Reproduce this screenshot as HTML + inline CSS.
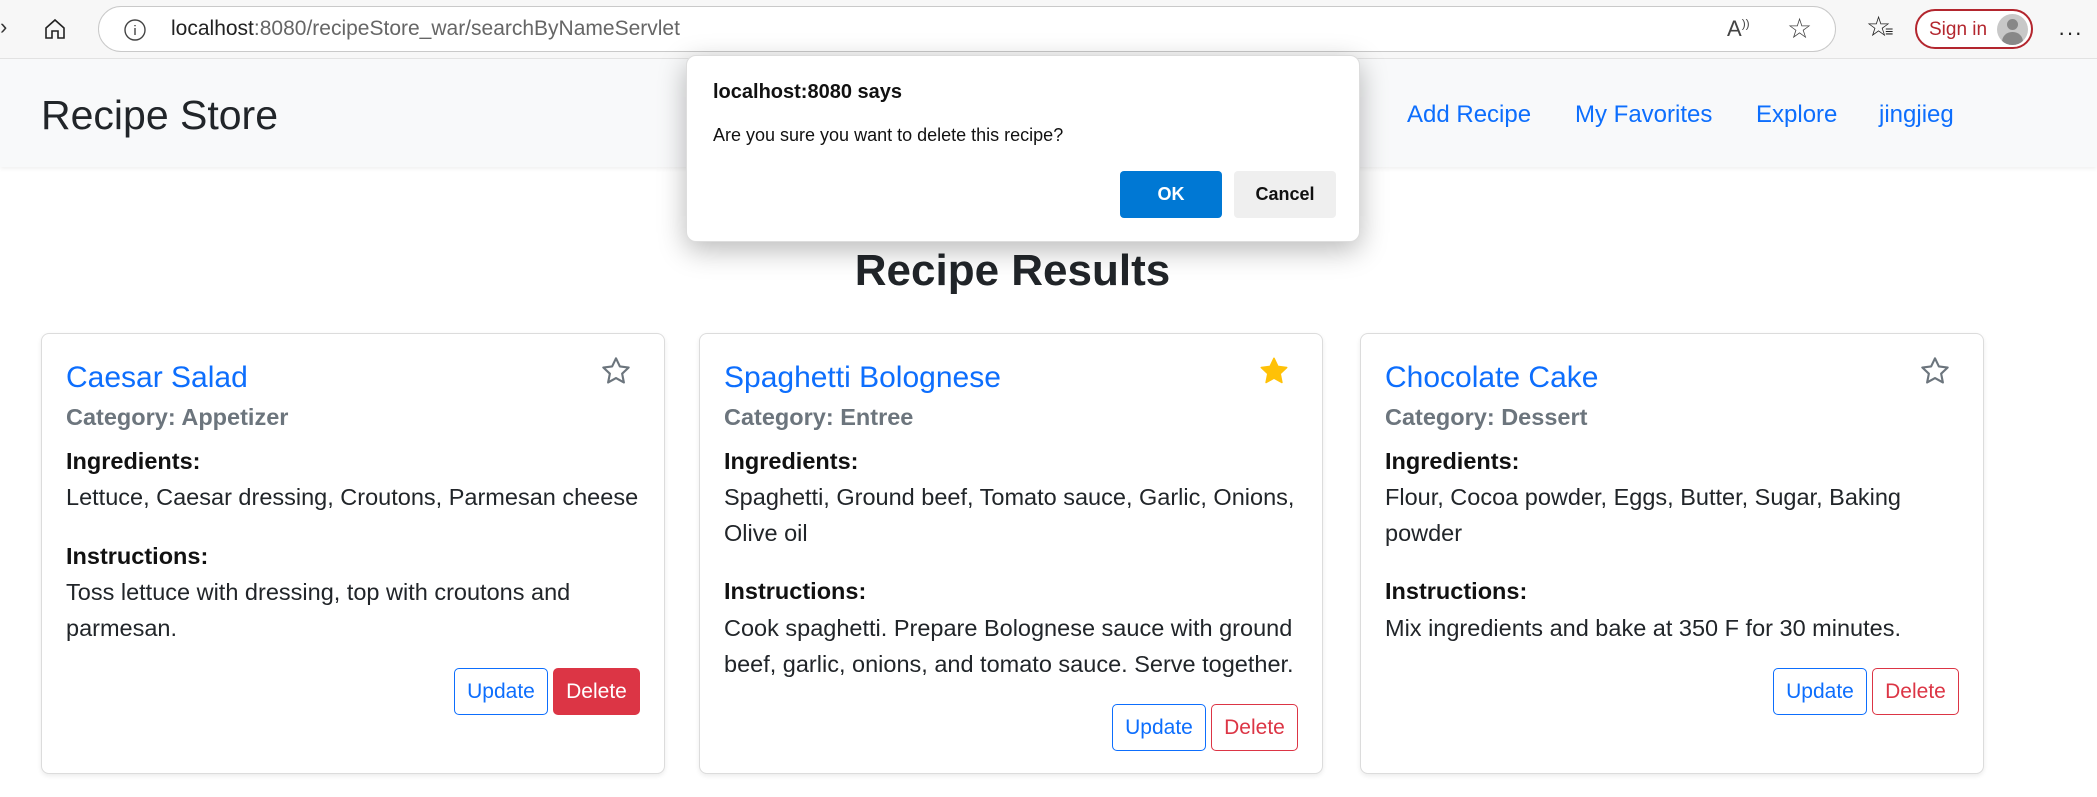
<!DOCTYPE html>
<html><head><meta charset="utf-8"><style>
*{box-sizing:border-box;margin:0;padding:0}
body{width:2097px;height:797px;overflow:hidden;background:#fff;font-family:"Liberation Sans",sans-serif;position:relative;color:#212529}
.abs{position:absolute;white-space:nowrap}
.tb{position:absolute;left:0;top:0;width:2097px;height:59px;background:#f7f7f7;border-bottom:1px solid #e3e3e3}
.url{position:absolute;left:98px;top:6px;width:1738px;height:46px;border:1px solid #c9c9c9;border-radius:23px;background:#fff}
.nav{position:absolute;left:0;top:59px;width:2097px;height:108px;background:#f8f9fa;box-shadow:0 2px 4px rgba(0,0,0,.06)}
.nl{position:absolute;top:99px;font-size:24px;color:#0d6efd;line-height:32px}
.card{position:absolute;top:333px;width:624px;height:441px;border:1px solid #dcdcdc;border-radius:8px;box-shadow:0 2px 5px rgba(0,0,0,.08);background:#fff}
.card .l{position:absolute;left:24px;white-space:nowrap;line-height:36px;font-size:23.5px}
.t{font-size:30px!important;color:#0d6efd;font-weight:500}
.c{color:#6c757d;font-weight:600}
.b{font-weight:700;color:#111}
.btn{position:absolute;height:47px;border:1px solid;border-radius:5px;font-size:21px;line-height:45px;text-align:center}
.up{color:#0d6efd;border-color:#0d6efd;width:94px}
.del{color:#dc3545;border-color:#dc3545;width:87px}
.star{position:absolute;right:32px;top:21px}
.dlg{position:absolute;left:686px;top:55px;width:674px;height:187px;background:#fff;border-radius:10px;box-shadow:0 8px 28px rgba(0,0,0,.28);border:1px solid #ddd}
</style></head><body>
<div class="tb">
 <div class="abs" style="left:0;top:14px;font-size:22px;color:#333">›</div>
 <svg class="abs" style="left:43px;top:17px" width="24" height="24" viewBox="0 0 24 24" fill="none" stroke="#222" stroke-width="1.6"><path d="M3 11 L12 3 L21 11 V21 H15 V14 H9 V21 H3 Z"/></svg>
 <div class="url">
  <svg class="abs" style="left:24px;top:11px" width="24" height="24" viewBox="0 0 24 24" fill="none" stroke="#444" stroke-width="1.4"><circle cx="12" cy="12" r="10"/><path d="M12 10v7M12 7v1.2"/></svg>
  <div class="abs" style="left:72px;top:10px;font-size:21px;color:#222">localhost<span style="color:#666">:8080/recipeStore_war/searchByNameServlet</span></div>
  <div class="abs" style="left:1628px;top:9px;font-size:22px;color:#444">A<sup style="font-size:12px">))</sup></div>
  <div class="abs" style="left:1688px;top:5px;font-size:28px;color:#444">☆</div>
 </div>
 <div class="abs" style="left:1866px;top:10px;font-size:28px;color:#222">☆<span style="font-size:14px;margin-left:-6px">≡</span></div>
 <div class="abs" style="left:1915px;top:9px;width:118px;height:40px;border:2px solid #b3262e;border-radius:20px;background:#fff">
  <div class="abs" style="left:12px;top:8px;font-size:19px;color:#b3262e">Sign in</div>
  <div class="abs" style="left:80px;top:3px;width:31px;height:31px;border-radius:50%;background:#c8c8c8;overflow:hidden"><div class="abs" style="left:10px;top:5px;width:11px;height:11px;border-radius:50%;background:#888"></div><div class="abs" style="left:5px;top:18px;width:21px;height:16px;border-radius:10px 10px 0 0;background:#888"></div></div>
 </div>
 <div class="abs" style="left:2058px;top:20px;font-size:22px;color:#222;letter-spacing:1px">···</div>
</div>
<div class="nav"></div>
<div class="abs" style="left:41px;top:92px;font-size:41px;color:#212529;line-height:46px">Recipe Store</div>
<div class="nl" style="left:1407px">Add Recipe</div>
<div class="nl" style="left:1575px">My Favorites</div>
<div class="nl" style="left:1756px">Explore</div>
<div class="nl" style="left:1879px">jingjieg</div>
<div class="abs" style="left:0;width:2025px;text-align:center;top:238px;font-size:44px;font-weight:700;line-height:66px;color:#212529">Recipe Results</div>

<div class="card" style="left:41px">
 <div class="l t" style="top:26px">Caesar Salad</div>
 <svg class="star" width="32" height="32" viewBox="0 0 24 24" fill="none" stroke="#6c757d" stroke-width="1.6" stroke-linejoin="round"><path d="M12 2.5l2.9 6.1 6.6.8-4.9 4.6 1.3 6.6L12 17.3l-5.9 3.3 1.3-6.6-4.9-4.6 6.6-.8z"/></svg>
 <div class="l c" style="top:65px">Category: Appetizer</div>
 <div class="l b" style="top:109px">Ingredients:</div>
 <div class="l" style="top:145px">Lettuce, Caesar dressing, Croutons, Parmesan cheese</div>
 <div class="l b" style="top:204px">Instructions:</div>
 <div class="l" style="top:240px">Toss lettuce with dressing, top with croutons and</div>
 <div class="l" style="top:276px">parmesan.</div>
 <div class="btn up" style="left:412px;top:334px">Update</div>
 <div class="btn del" style="left:511px;top:334px;background:#dc3545;color:#fff">Delete</div>
</div>

<div class="card" style="left:699px">
 <div class="l t" style="top:26px">Spaghetti Bolognese</div>
 <svg class="star" width="32" height="32" viewBox="0 0 24 24" fill="#ffc107" stroke="#ffc107" stroke-width="1.2" stroke-linejoin="round"><path d="M12 2.5l2.9 6.1 6.6.8-4.9 4.6 1.3 6.6L12 17.3l-5.9 3.3 1.3-6.6-4.9-4.6 6.6-.8z"/></svg>
 <div class="l c" style="top:65px">Category: Entree</div>
 <div class="l b" style="top:109px">Ingredients:</div>
 <div class="l" style="top:145px">Spaghetti, Ground beef, Tomato sauce, Garlic, Onions,</div>
 <div class="l" style="top:181px">Olive oil</div>
 <div class="l b" style="top:239px">Instructions:</div>
 <div class="l" style="top:276px">Cook spaghetti. Prepare Bolognese sauce with ground</div>
 <div class="l" style="top:312px">beef, garlic, onions, and tomato sauce. Serve together.</div>
 <div class="btn up" style="left:412px;top:370px">Update</div>
 <div class="btn del" style="left:511px;top:370px">Delete</div>
</div>

<div class="card" style="left:1360px">
 <div class="l t" style="top:26px">Chocolate Cake</div>
 <svg class="star" width="32" height="32" viewBox="0 0 24 24" fill="none" stroke="#6c757d" stroke-width="1.6" stroke-linejoin="round"><path d="M12 2.5l2.9 6.1 6.6.8-4.9 4.6 1.3 6.6L12 17.3l-5.9 3.3 1.3-6.6-4.9-4.6 6.6-.8z"/></svg>
 <div class="l c" style="top:65px">Category: Dessert</div>
 <div class="l b" style="top:109px">Ingredients:</div>
 <div class="l" style="top:145px">Flour, Cocoa powder, Eggs, Butter, Sugar, Baking</div>
 <div class="l" style="top:181px">powder</div>
 <div class="l b" style="top:239px">Instructions:</div>
 <div class="l" style="top:276px">Mix ingredients and bake at 350 F for 30 minutes.</div>
 <div class="btn up" style="left:412px;top:334px">Update</div>
 <div class="btn del" style="left:511px;top:334px">Delete</div>
</div>

<div class="dlg">
 <div class="abs" style="left:26px;top:25px;font-size:20px;font-weight:700;color:#111">localhost:8080 says</div>
 <div class="abs" style="left:26px;top:69px;font-size:18px;color:#111">Are you sure you want to delete this recipe?</div>
 <div class="abs" style="left:433px;top:115px;width:102px;height:47px;background:#0078d4;border-radius:4px;color:#fff;font-size:18px;font-weight:700;text-align:center;line-height:47px">OK</div>
 <div class="abs" style="left:547px;top:115px;width:102px;height:47px;background:#efefef;border-radius:4px;color:#111;font-size:18px;font-weight:700;text-align:center;line-height:47px">Cancel</div>
</div>
</body></html>
